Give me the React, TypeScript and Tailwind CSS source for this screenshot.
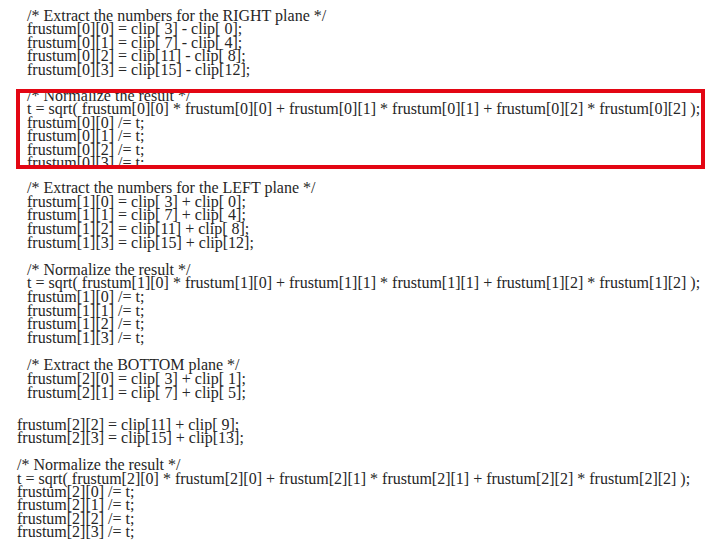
import React from "react";

type Line = { text: string; outdent?: boolean; tall?: boolean };

const block1: string[] = [
  "/* Extract the numbers for the RIGHT plane */",
  "frustum[0][0] = clip[ 3] - clip[ 0];",
  "frustum[0][1] = clip[ 7] - clip[ 4];",
  "frustum[0][2] = clip[11] - clip[ 8];",
  "frustum[0][3] = clip[15] - clip[12];",
];

const boxed: string[] = [
  "/* Normalize the result */",
  "t = sqrt( frustum[0][0] * frustum[0][0] + frustum[0][1] * frustum[0][1] + frustum[0][2] * frustum[0][2] );",
  "frustum[0][0] /= t;",
  "frustum[0][1] /= t;",
  "frustum[0][2] /= t;",
  "frustum[0][3] /= t;",
];

const block2: string[] = [
  "/* Extract the numbers for the LEFT plane */",
  "frustum[1][0] = clip[ 3] + clip[ 0];",
  "frustum[1][1] = clip[ 7] + clip[ 4];",
  "frustum[1][2] = clip[11] + clip[ 8];",
  "frustum[1][3] = clip[15] + clip[12];",
  "",
  "/* Normalize the result */",
  "t = sqrt( frustum[1][0] * frustum[1][0] + frustum[1][1] * frustum[1][1] + frustum[1][2] * frustum[1][2] );",
  "frustum[1][0] /= t;",
  "frustum[1][1] /= t;",
  "frustum[1][2] /= t;",
  "frustum[1][3] /= t;",
  "",
  "/* Extract the BOTTOM plane */",
  "frustum[2][0] = clip[ 3] + clip[ 1];",
  "frustum[2][1] = clip[ 7] + clip[ 5];",
];

const block3: string[] = [
  "frustum[2][2] = clip[11] + clip[ 9];",
  "frustum[2][3] = clip[15] + clip[13];",
  "",
  "/* Normalize the result */",
  "t = sqrt( frustum[2][0] * frustum[2][0] + frustum[2][1] * frustum[2][1] + frustum[2][2] * frustum[2][2] );",
  "frustum[2][0] /= t;",
  "frustum[2][1] /= t;",
  "frustum[2][2] /= t;",
  "frustum[2][3] /= t;",
];

function CodeLine({ text, outdent, tall }: Line) {
  return (
    <div
      className={
        "whitespace-pre " +
        (tall ? "h-[13.65px] leading-[13.65px] " : "h-[13.45px] leading-[13.45px] ") +
        (outdent ? "-ml-[10px]" : "")
      }
    >
      {text}
    </div>
  );
}

export default function App() {
  return (
    <div
      className="w-[720px] h-[540px] overflow-hidden bg-white text-[#262626] text-[16px] pl-[27px] pt-[9px]"
      style={{ fontFamily: '"Liberation Serif", "Times New Roman", serif' }}
    >
      {block1.map((t, i) => (
        <CodeLine key={"a" + i} text={t} />
      ))}
      <CodeLine text="" />

      {/* highlighted normalize step */}
      <div className="-ml-[11px] w-[689px] h-[80px] -mt-[0.7px] border-[4px] border-[#e30613] overflow-hidden">
        <div className="pl-[7px] -mt-[4px]">
          {boxed.map((t, i) => (
            <CodeLine key={"b" + i} text={t} />
          ))}
        </div>
      </div>
      <div className="h-[12px]" />

      {block2.map((t, i) => (
        <CodeLine key={"c" + i} text={t} tall />
      ))}
      <div className="h-[18.6px]" />
      {block3.map((t, i) => (
        <CodeLine key={"d" + i} text={t} outdent />
      ))}
    </div>
  );
}
